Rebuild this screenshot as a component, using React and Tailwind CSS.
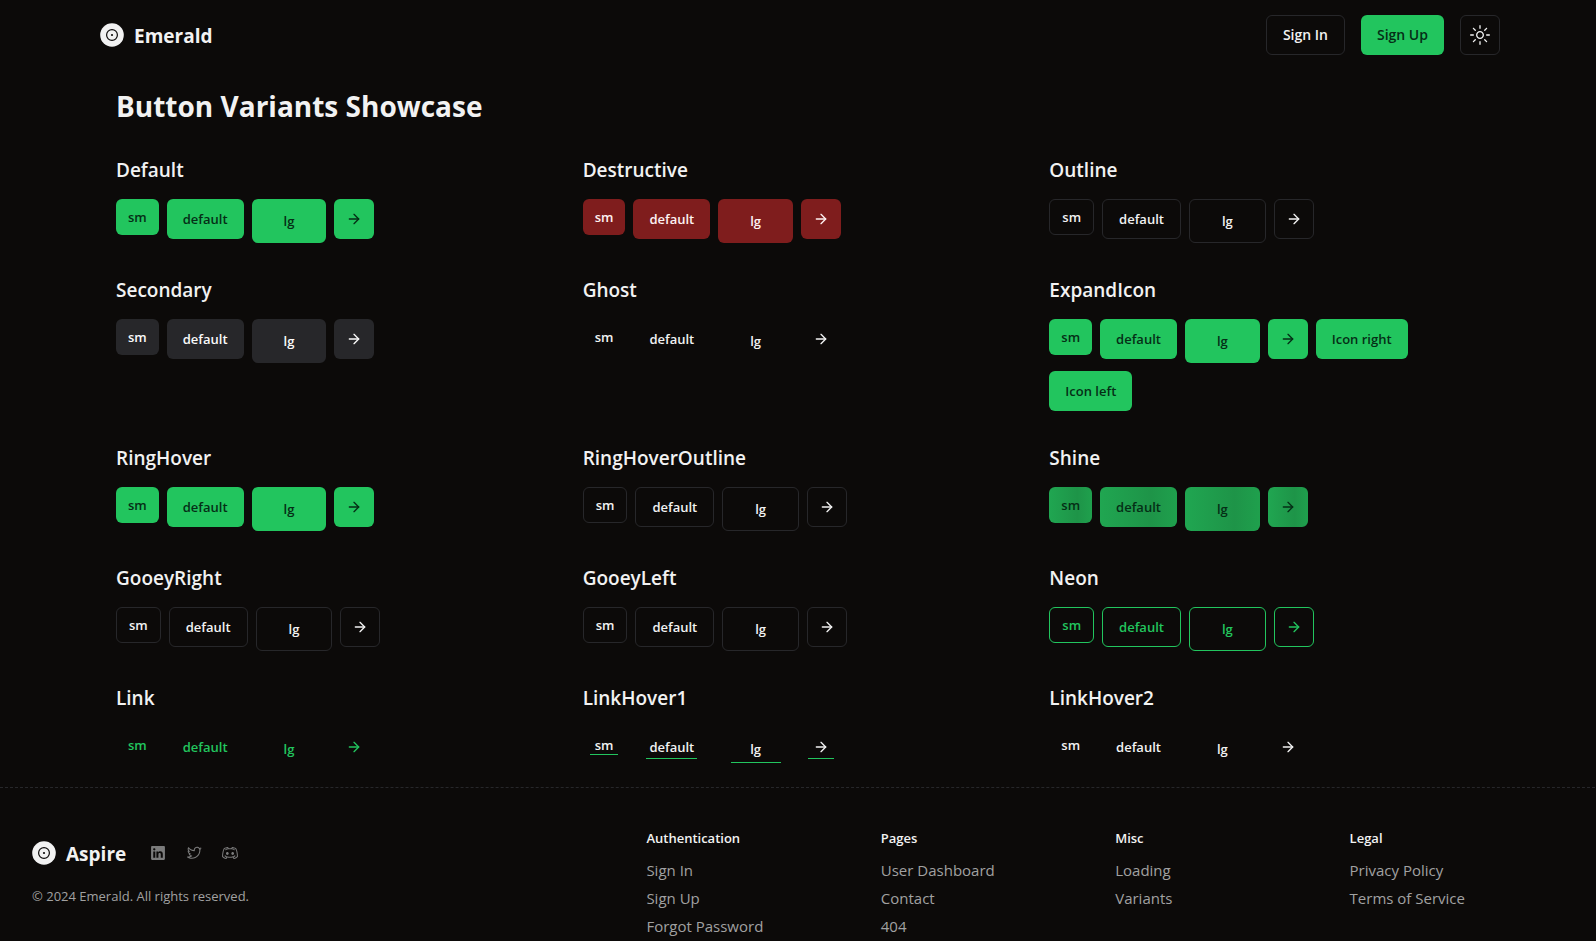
import { clsx } from 'clsx'
import { cva } from 'class-variance-authority'
import { ArrowRight } from 'lucide-react'
import {
  RxDiscordLogo,
  RxLinkedinLogo,
  RxSun,
  RxTwitterLogo,
} from 'react-icons/rx'

const buttonVariants = cva(
  'relative inline-flex items-center justify-center rounded-md leading-5 font-semibold whitespace-nowrap',
  {
    variants: {
      variant: {
        default: 'bg-[#22c55e] text-[#052e16]',
        destructive: 'bg-[#7f1d1d] text-[#fef2f2]',
        outline: 'border border-[#27272a]',
        secondary: 'bg-[#27272a] text-[#fafafa]',
        ghost: '',
        shine:
          'bg-[linear-gradient(90deg,#20a651_0%,#1e9448_66%,#1fa04d_100%)] text-[#052e16]',
        neon: 'border border-[#22c55e] text-[#22c55e]',
        link: 'text-[#22c55e]',
        linkHover1:
          'after:absolute after:bottom-2 after:left-1/6 after:h-px after:w-2/3 after:bg-[#22c55e]',
      },
      size: {
        sm: 'h-9 px-3 text-[13px]',
        default: 'h-10 px-4 text-[13px]',
        nav: 'h-10 px-4 text-sm',
        lg: 'h-11 px-8 text-[13px]',
        icon: 'size-10',
      },
    },
    defaultVariants: { variant: 'default', size: 'default' },
  }
)

const sections = [
  { title: 'Default', variant: 'default' },
  { title: 'Destructive', variant: 'destructive' },
  { title: 'Outline', variant: 'outline' },
  { title: 'Secondary', variant: 'secondary' },
  { title: 'Ghost', variant: 'ghost' },
  { title: 'ExpandIcon', variant: 'default', extra: ['Icon right', 'Icon left'] },
  { title: 'RingHover', variant: 'default' },
  { title: 'RingHoverOutline', variant: 'outline' },
  { title: 'Shine', variant: 'shine' },
  { title: 'GooeyRight', variant: 'outline' },
  { title: 'GooeyLeft', variant: 'outline' },
  { title: 'Neon', variant: 'neon' },
  { title: 'Link', variant: 'link' },
  { title: 'LinkHover1', variant: 'linkHover1' },
  { title: 'LinkHover2', variant: 'ghost' },
]

const footerLinks = [
  { title: 'Authentication', links: ['Sign In', 'Sign Up', 'Forgot Password'] },
  { title: 'Pages', links: ['User Dashboard', 'Contact', '404'] },
  { title: 'Misc', links: ['Loading', 'Variants'] },
  { title: 'Legal', links: ['Privacy Policy', 'Terms of Service'] },
]

const socials = [
  { name: 'LinkedIn', Icon: RxLinkedinLogo },
  { name: 'Twitter', Icon: RxTwitterLogo },
  { name: 'Discord', Icon: RxDiscordLogo },
]

function Button({ variant, size, className, ...props }) {
  return (
    <button
      type="button"
      className={clsx(buttonVariants({ variant, size }), className)}
      {...props}
    />
  )
}

function Logo({ name }) {
  return (
    <a href="#" className="flex items-center gap-2.5">
      <svg viewBox="0 0 24 24" aria-hidden="true" className="size-6">
        <circle cx="12" cy="12" r="11.8" fill="currentColor" />
        <circle cx="12" cy="12" r="5.4" fill="none" stroke="#0c0a09" strokeWidth="1.2" />
        <circle cx="12" cy="12" r="1.1" fill="#0c0a09" />
      </svg>
      <span className="pt-0.5 text-[19px] leading-7 font-bold">{name}</span>
    </a>
  )
}

function Header() {
  return (
    <header className="mx-auto flex h-[70px] max-w-[1400px] items-center justify-between">
      <Logo name="Emerald" />
      <div className="flex items-center gap-4">
        <Button variant="outline" size="nav">Sign In</Button>
        <Button size="nav">Sign Up</Button>
        <Button variant="outline" size="icon" aria-label="Toggle theme">
          <RxSun className="size-5" />
        </Button>
      </div>
    </header>
  )
}

function Section({ title, variant, extra = [] }) {
  return (
    <section>
      <h2 className="mb-3.5 text-[19px] leading-[30px] font-semibold">{title}</h2>
      <div className="flex flex-wrap items-start gap-2">
        <Button variant={variant} size="sm">sm</Button>
        <Button variant={variant}>default</Button>
        <Button variant={variant} size="lg">lg</Button>
        <Button variant={variant} size="icon" aria-label={`${title} icon`}>
          <ArrowRight className="size-4" />
        </Button>
        {extra.map((label) => (
          <Button key={label} variant={variant}>{label}</Button>
        ))}
      </div>
    </section>
  )
}

function Footer() {
  return (
    <footer className="flex border-t border-dashed border-[#27272a] px-8 pt-10 pb-10">
      <div className="w-2/5">
        <div className="flex items-center gap-6 pt-2.5">
          <Logo name="Aspire" />
          <div className="flex gap-5 text-[#7b7b7b]">
            {socials.map(({ name, Icon }) => (
              <a key={name} href="#" aria-label={name}>
                <Icon className="size-4" />
              </a>
            ))}
          </div>
        </div>
        <p className="mt-4.5 text-[13px] leading-5 text-[#a1a1a1]">
          © 2024 Emerald. All rights reserved.
        </p>
      </div>
      <div className="grid w-3/5 grid-cols-4 gap-4">
        {footerLinks.map(({ title, links }) => (
          <div key={title}>
            <h3 className="text-[13px] leading-5 font-semibold">{title}</h3>
            <ul className="mt-2.5 flex flex-col gap-1">
              {links.map((link) => (
                <li key={link} className="text-[15px] leading-6 font-medium text-[#a1a1a1]">
                  <a href="#">{link}</a>
                </li>
              ))}
            </ul>
          </div>
        ))}
      </div>
    </footer>
  )
}

export default function App() {
  return (
    <div className="min-h-screen overflow-x-hidden bg-[#0c0a09] font-['Open_Sans','Noto_Sans',sans-serif] text-[#f2f2f2]">
      <div className="-mr-1">
        <div className="border-b border-transparent">
          <Header />
        </div>
        <main className="mx-auto max-w-[1400px] p-4">
          <h1 className="mb-[30px] text-[28px] leading-[38px] font-bold">Button Variants Showcase</h1>
          <div className="grid grid-cols-3 gap-8">
            {sections.map((section) => (
              <Section key={section.title} {...section} />
            ))}
          </div>
        </main>
        <Footer />
      </div>
    </div>
  )
}
